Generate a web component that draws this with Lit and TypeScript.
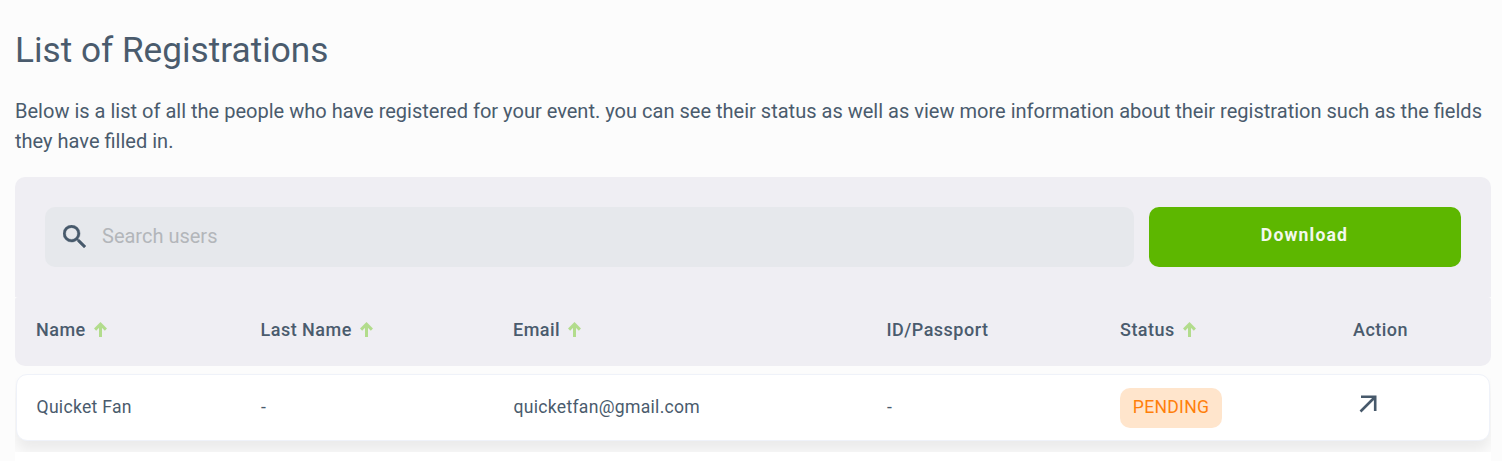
import { LitElement, html, css } from "lit";
import { customElement } from "lit/decorators.js";

const arrow = html`<svg class="sort" width="13" height="15" viewBox="0 0 13 15"><path d="M6.5 15V2.5M1.1 7.6L6.5 2.2L11.9 7.6" fill="none" stroke="#b2dc8c" stroke-width="3"/></svg>`;

@customElement("app-root")
export class AppRoot extends LitElement {
  static styles = css`
    :host { display: block; box-sizing: border-box; height: 461px; overflow: hidden; background: #fcfcfc; color: #4a5b6d; font-family: Roboto, sans-serif; padding: 28px 11px 0 15px; }
    * { box-sizing: border-box; }
    h1 { margin: 0; font-size: 35.2px; line-height: 44px; font-weight: 400; }
    p { margin: 24px 0 0; font-size: 20.05px; line-height: 30px; white-space: nowrap; }
    .tools { margin-top: 21px; height: 120px; background: #efeef3; border-radius: 10px 10px 0 0; padding: 30px 30px 0; display: flex; gap: 15px; }
    .search { width: 1089px; height: 60px; border-radius: 10px; background: #e6e8ec; display: flex; align-items: center; padding: 0 0 2px 18px; gap: 16px; font-size: 20px; color: #b3b6ba; }
    .search svg { margin-top: 1px; }
    .download { flex: 1; height: 60px; border: 0; border-radius: 10px; background: #5db700; color: #f3f8ee; font: 700 17.6px/56px Roboto, sans-serif; letter-spacing: 1.15px; padding: 0 1px 4px 0; }
    .grid { display: grid; grid-template-columns: 224.5px 252.5px 373.5px 233.5px 233px 1fr; align-items: center; }
    .head { height: 69px; padding: 0 0 4px 21px; background: #efeef3; border-radius: 3px 3px 10px 10px; font-size: 18px; font-weight: 500; letter-spacing: .48px; }
    .cell { display: flex; align-items: center; gap: 8px; }
    .cell span { line-height: 22px; }
    .list { height: 86px; padding: 8px 1px 0; overflow: hidden; }
    .row { height: 67px; padding: 0 0 2px 19.5px; background: #fff; border: 1px solid #eff2f9; border-radius: 11px; box-shadow: 0 10px 14px rgba(0,0,0,.07); font-size: 17.6px; letter-spacing: .28px; }
    .badge { display: block; width: 102px; height: 40px; line-height: 39px; text-align: center; border-radius: 10px; background: #ffe5cc; color: #ff7f0a; margin: 2px 0 0 -.5px; }
    .open { display: block; margin: -5px 0 0 5.5px; }
    .rest { height: 20px; background: #fff; }
  `;
  render() {
    const cols: [string, boolean][] = [["Name", true], ["Last Name", true], ["Email", true], ["ID/Passport", false], ["Status", true], ["Action", false]];
    return html`
      <h1>List of Registrations</h1>
      <p>Below is a list of all the people who have registered for your event. you can see their status as well as view more information about their registration such as the fields<br>they have filled in.</p>
      <div class="tools">
        <div class="search"><svg width="23" height="23" viewBox="3 3 17.5 17.5"><path fill="#47596b" stroke="#47596b" stroke-width=".3" d="M15.5 14h-.79l-.28-.27A6.47 6.47 0 0 0 16 9.5 6.5 6.5 0 1 0 9.5 16c1.61 0 3.09-.59 4.23-1.57l.27.28v.79l5 4.99L20.49 19l-4.99-5zm-6 0a4.5 4.5 0 1 1 0-9 4.5 4.5 0 0 1 0 9z"/></svg><span>Search users</span></div>
        <button class="download">Download</button>
      </div>
      <div class="grid head">${cols.map(([c, s]) => html`<div class="cell"><span>${c}</span>${s ? arrow : ""}</div>`)}</div>
      <div class="list">
        <div class="grid row">
          <div>Quicket Fan</div><div>-</div><div>quicketfan@gmail.com</div><div>-</div>
          <div><span class="badge">PENDING</span></div>
          <div><svg class="open" width="18" height="18" viewBox="0 0 18 18"><path d="M2 1.8H16.2V16M16 2L1.5 16.5" fill="none" stroke="#47596b" stroke-width="2.6"/></svg></div>
        </div>
      </div>
      <div class="rest"></div>`;
  }
}
